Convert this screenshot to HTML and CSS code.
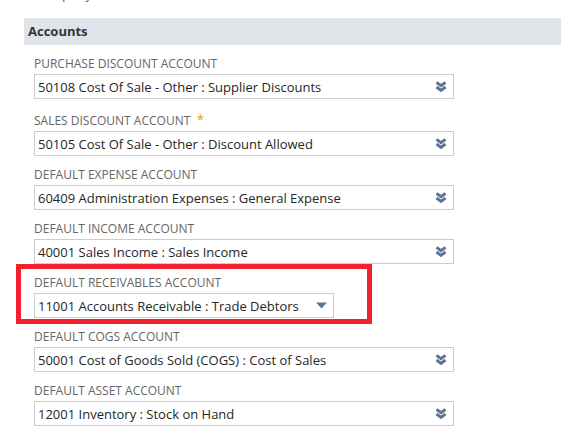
FILE: index.html
```html
<!DOCTYPE html>
<html lang="en">

<head>
  <meta charset="UTF-8" />
  <meta name="viewport" content="width=device-width, initial-scale=1.0" />
  <title>Accounts</title>
  <link rel="stylesheet" href="styles.css">
</head>

<body>
  <div class="top-link">
    <a href="#">Company</a>
  </div>

  <div class="group">
    <div class="group-head">Accounts</div>
    <div class="fields">
      <div class="field">
        <div class="field-label">PURCHASE DISCOUNT ACCOUNT</div>
        <div class="select">
          <span>50108 Cost Of Sale - Other : Supplier Discounts</span>
          <svg class="chev" width="12" height="11" viewBox="0 0 12 11"><path d="M1.5 1.3 L6 4.7 L10.5 1.3 M1.5 6 L6 9.4 L10.5 6" /></svg>
        </div>
      </div>

      <div class="field">
        <div class="field-label required">SALES DISCOUNT ACCOUNT <span class="star">*</span></div>
        <div class="select">
          <span>50105 Cost Of Sale - Other : Discount Allowed</span>
          <svg class="chev" width="12" height="11" viewBox="0 0 12 11"><path d="M1.5 1.3 L6 4.7 L10.5 1.3 M1.5 6 L6 9.4 L10.5 6" /></svg>
        </div>
      </div>

      <div class="field">
        <div class="field-label">DEFAULT EXPENSE ACCOUNT</div>
        <div class="select">
          <span>60409 Administration Expenses : General Expense</span>
          <svg class="chev" width="12" height="11" viewBox="0 0 12 11"><path d="M1.5 1.3 L6 4.7 L10.5 1.3 M1.5 6 L6 9.4 L10.5 6" /></svg>
        </div>
      </div>

      <div class="field">
        <div class="field-label">DEFAULT INCOME ACCOUNT</div>
        <div class="select">
          <span>40001 Sales Income : Sales Income</span>
          <svg class="chev" width="12" height="11" viewBox="0 0 12 11"><path d="M1.5 1.3 L6 4.7 L10.5 1.3 M1.5 6 L6 9.4 L10.5 6" /></svg>
        </div>
      </div>

      <div class="field">
        <div class="highlight"></div>
        <div class="field-label">DEFAULT RECEIVABLES ACCOUNT</div>
        <div class="select short">
          <span>11001 Accounts Receivable : Trade Debtors</span>
          <svg class="tri" width="11" height="7" viewBox="0 0 11 7"><polygon points="0,0.5 11,0.5 5.5,6.5" /></svg>
        </div>
      </div>

      <div class="field">
        <div class="field-label">DEFAULT COGS ACCOUNT</div>
        <div class="select">
          <span>50001 Cost of Goods Sold (COGS) : Cost of Sales</span>
          <svg class="chev" width="12" height="11" viewBox="0 0 12 11"><path d="M1.5 1.3 L6 4.7 L10.5 1.3 M1.5 6 L6 9.4 L10.5 6" /></svg>
        </div>
      </div>

      <div class="field">
        <div class="field-label">DEFAULT ASSET ACCOUNT</div>
        <div class="select">
          <span>12001 Inventory : Stock on Hand</span>
          <svg class="chev" width="12" height="11" viewBox="0 0 12 11"><path d="M1.5 1.3 L6 4.7 L10.5 1.3 M1.5 6 L6 9.4 L10.5 6" /></svg>
        </div>
      </div>
    </div>
  </div>
</body>

</html>
```

FILE: styles.css
```css
* {
  box-sizing: border-box;
}

body {
  margin: 0;
  font-family: "Open Sans", "Liberation Sans", sans-serif;
  background: #fff;
  color: #333;
}

.top-link {
  height: 18px;
  overflow: hidden;
  padding-left: 34px;
}

.top-link a {
  display: block;
  margin-top: -14px;
  font-size: 13px;
  line-height: 16px;
  color: #2f6ab8;
  text-decoration: none;
}

.group {
  margin-left: 24px;
}

.group-head {
  height: 27px;
  line-height: 27px;
  padding-left: 4px;
  background: #dfe3ea;
  font-size: 13px;
  font-weight: bold;
  color: #333;
}

.fields {
  padding-left: 10px;
}

.field {
  position: relative;
  margin-top: 11px;
}

.field-label {
  height: 16px;
  font-size: 12px;
  line-height: 16px;
  color: #666;
  margin-bottom: 2px;
}

.field-label.required {
  height: 19px;
  padding-top: 3px;
}

.field-label .star {
  color: #e5a11b;
  font-size: 14px;
  line-height: 12px;
  margin-left: 3px;
}

.select {
  width: 420px;
  height: 25px;
  border: 1px solid #ccc;
  background: #fff;
  display: flex;
  align-items: center;
  justify-content: space-between;
  padding: 0 6px 0 3px;
  font-size: 13px;
  color: #262626;
  white-space: nowrap;
}

.select.short {
  width: 300px;
}

.chev {
  fill: none;
  stroke: #5b7394;
  stroke-width: 2.9;
}

.tri {
  fill: #5b7394;
}

/* red marker drawn over the receivables field */
.highlight {
  position: absolute;
  left: -18px;
  top: -11px;
  width: 356px;
  height: 60px;
  border: 5px solid #f0222f;
  pointer-events: none;
}
```
